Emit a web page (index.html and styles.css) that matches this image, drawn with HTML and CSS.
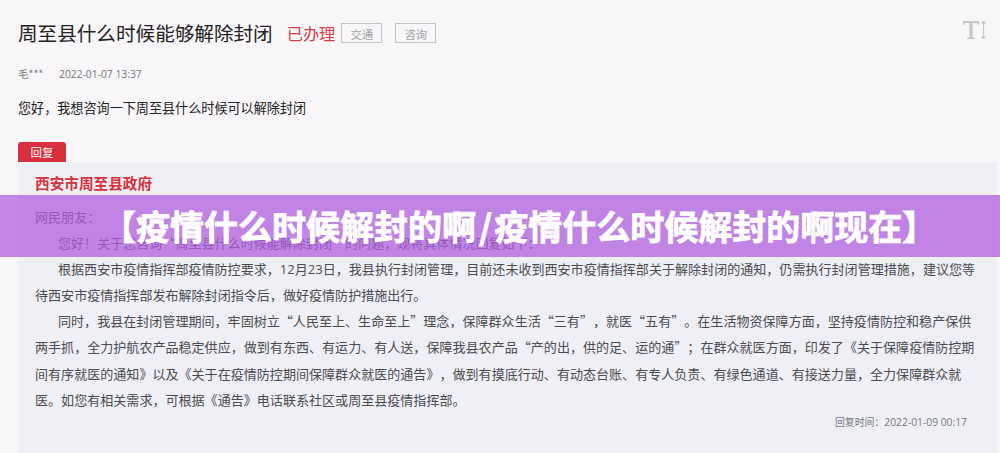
FILE: index.html
```html
<!DOCTYPE html>
<html lang="zh-CN">
<head>
    <meta charset="UTF-8">
    <title>周至县什么时候能够解除封闭</title>
    <link rel="stylesheet" href="styles.css">
</head>
<body>
    <div class="page">
        <div class="head">
            <h1>周至县什么时候能够解除封闭</h1>
            <span class="status">已办理</span>
            <span class="tag">交通</span>
            <span class="tag">咨询</span>
            <svg class="font-size" width="26" height="22" viewBox="0 0 26 22">
                <path d="M1 2h16v4h-1l-1-2h-4.500v14l2.500 1v1h-8v-1l2.500-1v-14h-4.500l-1 2h-1z" fill="#c6c6c8"/>
                <path d="M21.500 3v16M19.500 4.500l2-2 2 2M19.500 17.500l2 2 2-2" fill="none" stroke="#c6c6c8" stroke-width="1.200"/>
            </svg>
        </div>
        <div class="meta">
            <span class="name">毛***</span>
            <span class="date">2022-01-07 13:37</span>
        </div>
        <p class="question">您好，我想咨询一下周至县什么时候可以解除封闭</p>

        <div class="tab">回复</div>
        <div class="reply">
            <h2>西安市周至县政府</h2>
            <div class="content">
                <p class="hello">网民朋友：</p>
                <p>您好！关于您咨询“周至县什么时候能解除封闭”的问题，现将具体情况回复如下：</p>
                <p>根据西安市疫情指挥部疫情防控要求，<span class="num">12</span>月<span class="num">23</span>日，我县执行封闭管理，目前还未收到西安市疫情指挥部关于解除封闭的通知，仍需执行封闭管理措施，建议您等<br>待西安市疫情指挥部发布解除封闭指令后，做好疫情防护措施出行。</p>
                <p>同时，我县在封闭管理期间，牢固树立“人民至上、生命至上”理念，保障群众生活“三有”，就医“五有”。在生活物资保障方面，坚持疫情防控和稳产保供<br>两手抓，全力护航农产品稳定供应，做到有东西、有运力、有人送，保障我县农产品“产的出，供的足、运的通”；在群众就医方面，印发了《关于保障疫情防控期<br>间有序就医的通知》以及《关于在疫情防控期间保障群众就医的通告》，做到有摸底行动、有动态台账、有专人负责、有绿色通道、有接送力量，全力保障群众就<br>医。如您有相关需求，可根据《通告》电话联系社区或周至县疫情指挥部。</p>
            </div>
            <div class="time">回复时间：<span class="date">2022-01-09 00:17</span></div>
        </div>

        <div class="banner">【疫情什么时候解封的啊<span class="slash">/</span>疫情什么时候解封的啊现在】</div>
    </div>
</body>
</html>
```
FILE: styles.css
```css
* {
    box-sizing: border-box;
}

body {
    margin: 0;
    background-color: #f8f6f9;
    font-family: "Noto Sans CJK SC", sans-serif;
    color: #222;
    text-spacing-trim: space-all;
}

h1, h2, p {
    margin: 0;
    font-weight: normal;
}

.page {
    position: relative;
    height: 453px;
    padding: 18px 3px 0 18px;
    overflow: hidden;
    white-space: nowrap;
}

.head {
    display: flex;
    align-items: center;
    height: 30px;
}

.head h1 {
    font-size: 19.6px;
    line-height: 30px;
}

.status {
    margin: 0 6px 0 14px;
    font-size: 16.2px;
    line-height: 30px;
    color: #dc3b48;
}

.tag {
    width: 41px;
    height: 20px;
    margin-right: 13px;
    border: 1px solid #c3c2c5;
    font-size: 11.3px;
    line-height: 20px;
    text-align: center;
    color: #a3a2a5;
}

.font-size {
    margin: -6px 9px 0 auto;
}

.meta {
    display: flex;
    height: 16px;
    margin-top: 18px;
    font-size: 10.5px;
    line-height: 16px;
    color: #777;
}

.name {
    width: 41px;
}

.date {
    font-family: "Open Sans", sans-serif;
    font-size: 10.3px;
}

.question {
    margin-top: 15px;
    font-size: 13.1px;
    line-height: 22px;
}

.tab {
    width: 48px;
    height: 20px;
    margin-top: 23px;
    border-radius: 3px 3px 0 0;
    background-color: #d9303e;
    font-size: 11.5px;
    line-height: 21px;
    text-align: center;
    color: #fff;
}

.reply {
    height: 291px;
    padding: 9px 12px 0 17px;
    background-color: #eff0f6;
}

.reply h2 {
    font-size: 14.65px;
    font-weight: bold;
    line-height: 24px;
    color: #d9303e;
}

.content {
    margin-top: 9px;
    font-size: 13.05px;
    line-height: 26.1px;
    color: #4b4b4f;
}

.content p {
    text-indent: 23px;
}

.content .hello {
    text-indent: 0;
}

.num {
    font-family: "Open Sans", sans-serif;
    line-height: 1;
}

.time {
    padding-right: 18px;
    font-size: 9.9px;
    line-height: 18px;
    text-align: right;
    color: #77777b;
}

/* purple title strip over the page */
.banner {
    position: absolute;
    top: 195px;
    left: 0;
    width: 100%;
    height: 62px;
    padding-left: 102px;
    background-color: rgba(176, 92, 222, 0.73);
    font-size: 34px;
    font-weight: bold;
    line-height: 62px;
    color: #fff;
    -webkit-text-stroke: 0.8px #fff;
}

.slash {
    margin: 0 2px 0 3px;
}
```
